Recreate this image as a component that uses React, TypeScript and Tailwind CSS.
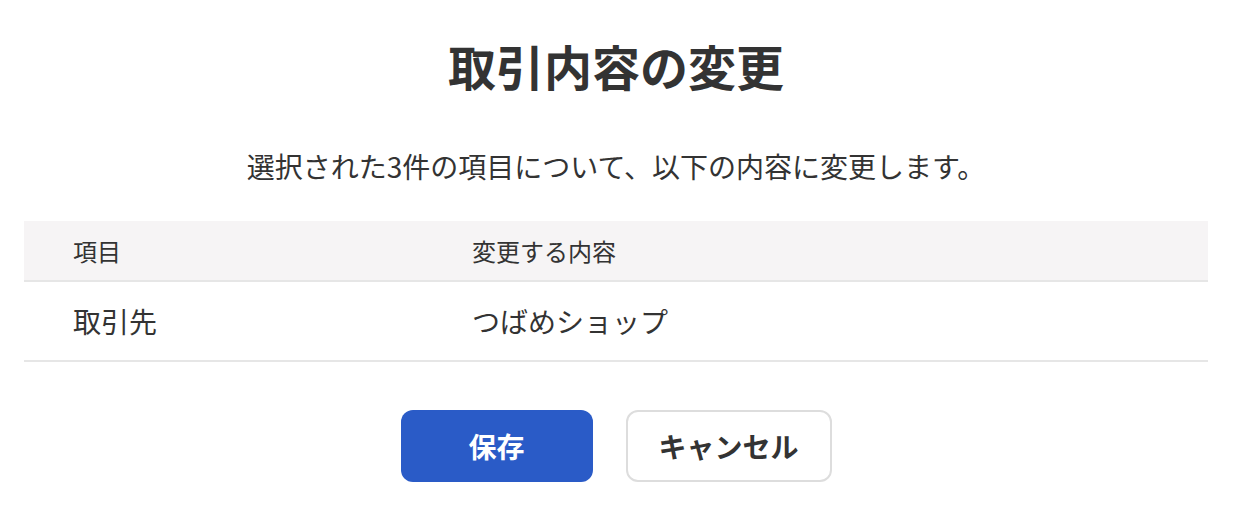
export default function App() {
  return (
    <div className="min-h-screen bg-white text-[#333] font-['Noto_Sans_CJK_JP','Noto_Sans',sans-serif]">
      <div className="pl-6 pr-[30px] pt-[29px]">
        <h1 className="text-center text-[48px] leading-[72px] font-bold">取引内容の変更</h1>
        <p className="mt-[44px] text-center text-[28px] leading-[42px]">
          選択された3件の項目について、以下の内容に変更します。
        </p>

        <div className="mt-[34px]">
          <div className="flex h-[61px] items-center border-b-2 border-[#e6e6e6] bg-[#f6f4f5] text-[24px]">
            <div className="w-[448px] pl-[49px]">項目</div>
            <div>変更する内容</div>
          </div>
          <div className="flex h-[80px] items-center border-b-2 border-[#e6e6e6] text-[28px]">
            <div className="w-[448px] pl-[49px]">取引先</div>
            <div>つばめショップ</div>
          </div>
        </div>

        <div className="mt-[48px] flex justify-center gap-[33px]">
          <button className="h-[72px] w-[192px] rounded-[12px] bg-[#2a5bc7] text-[28px] font-bold text-white">
            保存
          </button>
          <button className="h-[72px] w-[206px] rounded-[12px] border-2 border-[#dddddd] bg-white text-[28px] font-bold text-[#333]">
            キャンセル
          </button>
        </div>
      </div>
    </div>
  );
}
